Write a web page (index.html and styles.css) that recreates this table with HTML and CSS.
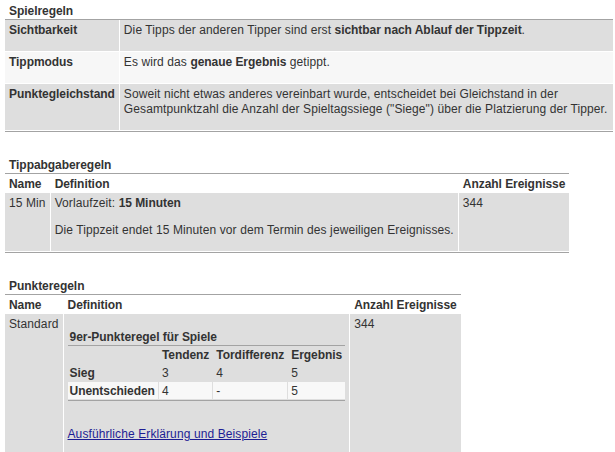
FILE: index.html
```html
<!DOCTYPE html>
<html lang="de">
<head>
<meta charset="utf-8">
<title>Regeln</title>
<link rel="stylesheet" href="styles.css">
</head>
<body>
<div class="page">
  <section class="block">
    <div class="title">Spielregeln</div>
    <table class="grid full">
      <tr class="dark">
        <th>Sichtbarkeit</th>
        <td><p>Die Tipps der anderen Tipper sind erst <b>sichtbar nach Ablauf der Tippzeit</b>.</p></td>
      </tr>
      <tr class="light">
        <th>Tippmodus</th>
        <td><p>Es wird das <b>genaue Ergebnis</b> getippt.</p></td>
      </tr>
      <tr class="dark">
        <th>Punktegleichstand</th>
        <td><p>Soweit nicht etwas anderes vereinbart wurde, entscheidet bei Gleichstand in der Gesamtpunktzahl die Anzahl der Spieltagssiege ("Siege") über die Platzierung der Tipper.</p></td>
      </tr>
    </table>
  </section>

  <section class="block">
    <div class="title">Tippabgaberegeln</div>
    <table class="grid">
      <tr class="head">
        <th>Name</th>
        <th>Definition</th>
        <th>Anzahl Ereignisse</th>
      </tr>
      <tr class="dark">
        <td>15&nbsp;Min</td>
        <td>
          <p>Vorlaufzeit: <b>15 Minuten</b></p>
          <p>Die Tippzeit endet 15 Minuten vor dem Termin des jeweiligen Ereignisses.</p>
        </td>
        <td>344</td>
      </tr>
    </table>
  </section>

  <section class="block">
    <div class="title">Punkteregeln</div>
    <table class="grid">
      <tr class="head">
        <th>Name</th>
        <th>Definition</th>
        <th>Anzahl Ereignisse</th>
      </tr>
      <tr class="dark">
        <td>Standard</td>
        <td class="def">
          <table class="sub">
            <tr><th colspan="4" class="subtitle">9er-Punkteregel für Spiele</th></tr>
            <tr><th></th><th>Tendenz</th><th>Tordifferenz</th><th>Ergebnis</th></tr>
            <tr><th>Sieg</th><td>3</td><td>4</td><td>5</td></tr>
            <tr class="light"><th>Unentschieden</th><td>4</td><td>-</td><td>5</td></tr>
          </table>
          <p class="more"><a href="#">Ausführliche Erklärung und Beispiele</a></p>
        </td>
        <td>344</td>
      </tr>
    </table>
  </section>
</div>
</body>
</html>
```

FILE: styles.css
```css
html, body {
  margin: 0;
  background: #fff;
}

.page {
  padding: 4px 2px 0 5px;
  font-family: "Liberation Sans", Arial, sans-serif;
  font-size: 12px;
  line-height: 15px;
  letter-spacing: 0.1px;
  color: #333;
}

.page b,
.page th,
.title {
  letter-spacing: -0.05px;
}

.block {
  margin-bottom: 26px;
}

.title {
  font-weight: bold;
  padding-left: 4px;
}

.grid {
  border-collapse: separate;
  border-spacing: 0;
  border-top: 1px solid #a3a3a3;
  border-bottom: 1px solid #a3a3a3;
}

.full {
  width: 100%;
}

.grid > tbody > tr > th,
.grid > tbody > tr > td {
  padding: 3px 4px 0;
  border-bottom: 1px solid #fff;
  vertical-align: top;
  text-align: left;
  white-space: nowrap;
}

.grid > tbody > tr.dark > th,
.grid > tbody > tr.dark > td,
.grid > tbody > tr.light > th,
.grid > tbody > tr.light > td {
  padding-bottom: 1px;
}

.full > tbody > tr > td {
  white-space: normal;
  width: 100%;
}

.grid > tbody > tr > td p {
  white-space: nowrap;
}

.full > tbody > tr > td p {
  white-space: normal;
}

.grid > tbody > tr > th + th,
.grid > tbody > tr > th + td,
.grid > tbody > tr > td + td {
  border-left: 1px solid #fff;
}

.grid > tbody > tr > th {
  font-weight: bold;
}

.dark > th,
.dark > td {
  background: #dedede;
}

.light > th,
.light > td {
  background: #f7f7f7;
}

.grid p {
  margin: 0 0 12px;
}

.grid b {
  font-weight: bold;
}

/* nested score table */
.sub {
  margin-top: 13px;
  border-collapse: separate;
  border-spacing: 0;
  border-bottom: 1px solid #a3a3a3;
}

.sub th,
.sub td {
  padding: 2px 3px 0 3px;
  text-align: left;
  vertical-align: top;
  font-weight: normal;
  white-space: nowrap;
  border-bottom: 1px solid transparent;
  background-clip: padding-box;
}

.sub th {
  font-weight: bold;
}

.sub tr > th:first-child {
  padding-left: 2px;
}

.sub th + th,
.sub th + td,
.sub td + td {
  border-left: 1px solid transparent;
}

.sub .subtitle {
  padding: 0 2px;
  border-bottom: 1px solid #a3a3a3;
}

.sub .light > th,
.sub .light > td {
  background: #f8f8f8;
  background-clip: padding-box;
}

.grid p.more {
  margin: 26px 0 12px;
}

.more a {
  color: #1d1d94;
  text-decoration: underline;
}
```
